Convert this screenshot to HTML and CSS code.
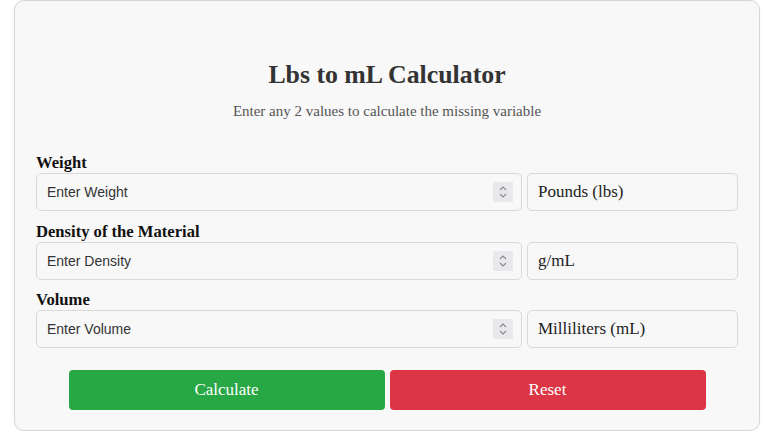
FILE: index.html
```html
<!DOCTYPE html>
<html lang="en">
<head>
<meta charset="utf-8">
<title>Lbs to mL Calculator</title>
<link rel="stylesheet" href="styles.css">
</head>
<body>
<div class="calc">
  <h1 class="title">Lbs to mL Calculator</h1>
  <p class="subtitle">Enter any 2 values to calculate the missing variable</p>

  <div class="group">
    <label class="label">Weight</label>
    <div class="row">
      <div class="field">
        <input class="input" type="text" placeholder="Enter Weight">
        <span class="spin"><svg width="10" height="14" viewBox="0 0 10 14"><path d="M2 5 L5 2 L8 5" fill="none" stroke="#8a8a8a" stroke-width="1.1"/><path d="M2 9 L5 12 L8 9" fill="none" stroke="#8a8a8a" stroke-width="1.1"/></svg></span>
      </div>
      <div class="unit">Pounds (lbs)</div>
    </div>
  </div>

  <div class="group">
    <label class="label">Density of the Material</label>
    <div class="row">
      <div class="field">
        <input class="input" type="text" placeholder="Enter Density">
        <span class="spin"><svg width="10" height="14" viewBox="0 0 10 14"><path d="M2 5 L5 2 L8 5" fill="none" stroke="#8a8a8a" stroke-width="1.1"/><path d="M2 9 L5 12 L8 9" fill="none" stroke="#8a8a8a" stroke-width="1.1"/></svg></span>
      </div>
      <div class="unit">g/mL</div>
    </div>
  </div>

  <div class="group">
    <label class="label">Volume</label>
    <div class="row">
      <div class="field">
        <input class="input" type="text" placeholder="Enter Volume">
        <span class="spin"><svg width="10" height="14" viewBox="0 0 10 14"><path d="M2 5 L5 2 L8 5" fill="none" stroke="#8a8a8a" stroke-width="1.1"/><path d="M2 9 L5 12 L8 9" fill="none" stroke="#8a8a8a" stroke-width="1.1"/></svg></span>
      </div>
      <div class="unit">Milliliters (mL)</div>
    </div>
  </div>

  <div class="buttons">
    <button class="btn btn-calc">Calculate</button>
    <button class="btn btn-reset">Reset</button>
  </div>
</div>
</body>
</html>
```

FILE: styles.css
```css
html, body {
  margin: 0;
  padding: 0;
  background: #ffffff;
}
body {
  font-family: "Liberation Serif", "Times New Roman", serif;
  color: #222;
}
.calc {
  box-sizing: border-box;
  margin-left: 14px;
  width: 746px;
  height: 431px;
  background: #f8f8f8;
  border: 1px solid #d6d6d6;
  border-radius: 10px;
  padding: 60px 21px 20px 21px;
  box-shadow: 0 0 3px rgba(0,0,0,0.06);
}
.title {
  margin: 0 0 14px 0;
  font-size: 25.8px;
  line-height: 28px;
  font-weight: bold;
  text-align: center;
  color: #333;
}
.subtitle {
  margin: 0 0 35px 0;
  font-size: 15px;
  line-height: 16px;
  text-align: center;
  color: #555;
}
.group {
  margin-bottom: 11.5px;
}
.label {
  display: block;
  font-size: 16.6px;
  line-height: 18px;
  font-weight: bold;
  color: #111;
  margin-bottom: 1px;
}
.row {
  display: grid;
  grid-template-columns: 486px 211px;
  column-gap: 5px;
}
.field {
  position: relative;
}
.input {
  box-sizing: border-box;
  width: 100%;
  height: 38px;
  margin: 0;
  padding: 0 10px;
  border: 1px solid #d9d9d9;
  border-radius: 5px;
  background: #f8f8f8;
  font-family: "Liberation Sans", Arial, sans-serif;
  font-size: 14px;
  color: #222;
  outline: none;
}
.input::placeholder {
  color: #333;
  opacity: 1;
}
.spin {
  position: absolute;
  right: 9px;
  top: 9px;
  width: 20px;
  height: 20px;
  background: #e9e9ed;
  display: flex;
  align-items: center;
  justify-content: center;
}
.unit {
  box-sizing: border-box;
  height: 38px;
  padding: 0 10px;
  border: 1px solid #d9d9d9;
  border-radius: 5px;
  background: #f8f8f8;
  display: flex;
  align-items: center;
  font-size: 17px;
  color: #222;
}
.buttons {
  display: flex;
  justify-content: center;
  gap: 5px;
  margin-top: 22px;
}
.btn {
  width: 316px;
  height: 40px;
  border: none;
  border-radius: 4px;
  color: #fff;
  font-family: "Liberation Serif", "Times New Roman", serif;
  font-size: 17px;
  cursor: pointer;
}
.btn-calc {
  background: #28a745;
}
.btn-reset {
  background: #dc3545;
}
```
